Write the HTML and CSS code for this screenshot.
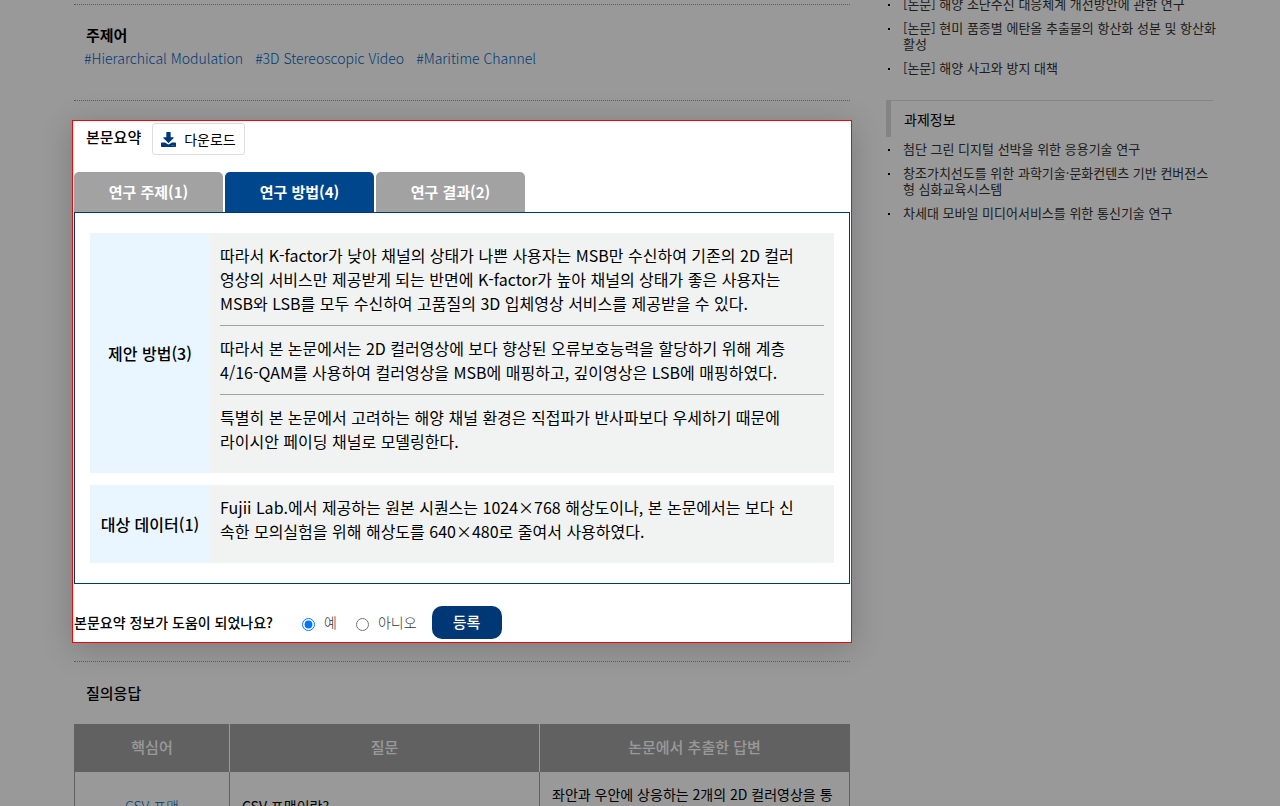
FILE: index.html
```html
<!DOCTYPE html>
<html lang="ko">
<head>
    <meta charset="UTF-8">
    <meta name="viewport" content="width=device-width, initial-scale=1.0">
    <title>본문요약</title>
    <link rel="stylesheet" href="styles.css">
</head>
<body>
    <div class="page">
        <main class="content">
            <section class="keywords">
                <h2 class="title">주제어</h2>
                <div class="keyword-list">
                    <a href="#">#Hierarchical Modulation</a>
                    <a href="#">#3D Stereoscopic Video</a>
                    <a href="#">#Maritime Channel</a>
                </div>
            </section>

            <section class="summary">
                <div class="summary-head">
                    <h2 class="title">본문요약</h2>
                    <button type="button" class="download">
                        <svg width="15" height="15" viewBox="0 0 512 512" aria-hidden="true">
                            <path fill="#003876" fill-rule="evenodd" d="M200 0h112c10 0 18 8 18 18v162h82c18 0 27 21 14 34L270 370c-8 8-20 8-28 0L86 214c-13-13-4-34 14-34h82V18c0-10 8-18 18-18zm312 386v102c0 13-11 24-24 24H24c-13 0-24-11-24-24V386c0-13 11-24 24-24h114l82 50c20 14 52 14 72 0l82-50h114c13 0 24 11 24 24zM388 464a12 12 0 1 0-24 0 12 12 0 0 0 24 0zm64 0a12 12 0 1 0-24 0 12 12 0 0 0 24 0z"/>
                        </svg>
                        다운로드
                    </button>
                </div>

                <div class="tabs" role="tablist">
                    <button type="button" class="tab" role="tab">연구 주제(1)</button>
                    <button type="button" class="tab active" role="tab" aria-selected="true">연구 방법(4)</button>
                    <button type="button" class="tab" role="tab">연구 결과(2)</button>
                </div>

                <div class="panel">
                    <table class="summary-table">
                        <tr>
                            <th scope="row">제안 방법(3)</th>
                            <td>
                                <p>따라서 K-factor가 낮아 채널의 상태가 나쁜 사용자는 MSB만 수신하여 기존의 2D 컬러<br>영상의 서비스만 제공받게 되는 반면에 K-factor가 높아 채널의 상태가 좋은 사용자는<br>MSB와 LSB를 모두 수신하여 고품질의 3D 입체영상 서비스를 제공받을 수 있다.</p>
                                <p>따라서 본 논문에서는 2D 컬러영상에 보다 향상된 오류보호능력을 할당하기 위해 계층<br>4/16-QAM를 사용하여 컬러영상을 MSB에 매핑하고, 깊이영상은 LSB에 매핑하였다.</p>
                                <p>특별히 본 논문에서 고려하는 해양 채널 환경은 직접파가 반사파보다 우세하기 때문에<br>라이시안 페이딩 채널로 모델링한다.</p>
                            </td>
                        </tr>
                        <tr>
                            <th scope="row">대상 데이터(1)</th>
                            <td>
                                <p>Fujii Lab.에서 제공하는 원본 시퀀스는 1024×768 해상도이나, 본 논문에서는 보다 신<br>속한 모의실험을 위해 해상도를 640×480로 줄여서 사용하였다.</p>
                            </td>
                        </tr>
                    </table>
                </div>

                <form class="feedback">
                    <span class="question">본문요약 정보가 도움이 되었나요?</span>
                    <input type="radio" name="helpful" id="helpfulYes" checked>
                    <label for="helpfulYes">예</label>
                    <input type="radio" name="helpful" id="helpfulNo">
                    <label for="helpfulNo">아니오</label>
                    <button type="button" class="submit">등록</button>
                </form>
            </section>

            <section class="qna">
                <h2 class="title">질의응답</h2>
                <table class="qna-table">
                    <thead>
                        <tr>
                            <th class="col-key">핵심어</th>
                            <th class="col-text">질문</th>
                            <th class="col-text">논문에서 추출한 답변</th>
                        </tr>
                    </thead>
                    <tbody>
                        <tr>
                            <td class="key"><a href="#">CSV 포맷</a></td>
                            <td>CSV 포맷이란?</td>
                            <td class="answer">좌안과 우안에 상응하는 2개의 2D 컬러영상을 통</td>
                        </tr>
                    </tbody>
                </table>
            </section>
        </main>

        <aside class="side">
            <ul class="side-list">
                <li>[논문] 해양 조난수신 대응체계 개선방안에 관한 연구</li>
                <li>[논문] 현미 품종별 에탄올 추출물의 항산화 성분 및 항산화<br>활성</li>
                <li>[논문] 해양 사고와 방지 대책</li>
            </ul>
            <h3 class="side-title">과제정보</h3>
            <ul class="side-list">
                <li>첨단 그린 디지털 선박을 위한 응용기술 연구</li>
                <li>창조가치선도를 위한 과학기술·문화컨텐츠 기반 컨버전스<br>형 심화교육시스템</li>
                <li>차세대 모바일 미디어서비스를 위한 통신기술 연구</li>
            </ul>
        </aside>
    </div>
</body>
</html>
```
FILE: styles.css
```css
* {
    box-sizing: border-box;
}
body {
    margin: 0;
    height: 100vh;
    overflow: hidden;
    background-color: #fff;
    color: #000;
    font-family: "Noto Sans CJK KR", sans-serif;
    font-size: 16px;
    line-height: 24px;
}
h2, h3, p, ul {
    margin: 0;
    padding: 0;
}
a {
    color: #0064c0;
    text-decoration: none;
}
button, input {
    font-family: inherit;
    margin: 0;
}
table {
    width: 100%;
}
.page {
    display: flex;
    gap: 36px;
    padding: 0 64px 0 74px;
}
.content {
    flex: 1;
    min-width: 0;
    padding-top: 4px;
}
.title {
    padding-left: 12px;
    font-size: 15px;
    font-weight: 500;
    line-height: 24px;
}

/* keywords */
.keywords {
    height: 97px;
    padding-top: 18px;
    border-top: 1px dotted #999;
    border-bottom: 1px dotted #999;
}
.keywords .title {
    font-weight: 700;
}
.keyword-list {
    display: flex;
    gap: 12px;
    padding-left: 10px;
    font-size: 14px;
    font-weight: 300;
    line-height: 22px;
}

/* highlighted summary, the shadow dims the rest of the page */
.summary {
    position: relative;
    z-index: 1;
    margin: 19px -2px 18px;
    padding: 2px 1px 3px;
    border: 1px solid #f00;
    background-color: #fff;
    box-shadow: 0 5px 30px rgba(0,0,0,0.2), 0 0 0 2000px rgba(0,0,0,0.4);
}
.summary-head {
    display: flex;
    align-items: flex-start;
    gap: 11px;
    height: 49px;
}
.summary-head .title {
    padding-top: 2px;
}
.download {
    display: flex;
    align-items: center;
    gap: 8px;
    height: 32px;
    padding: 0 8px;
    border: 1px solid #ddd;
    border-radius: 3px;
    background-color: #fff;
    color: #000;
    font-size: 14px;
}
.tabs {
    display: flex;
    gap: 2px;
}
.tab {
    width: 149px;
    height: 40px;
    padding: 0 0 2px;
    border: none;
    border-radius: 5px 5px 0 0;
    background-color: #a2a2a2;
    color: #fff;
    font-size: 15px;
    font-weight: 700;
}
.tab.active {
    background-color: #00468c;
}
.panel {
    padding: 8px 15px;
    border: 1px solid #003876;
}
.summary-table {
    border-spacing: 0 12px;
}
.summary-table th {
    width: 120px;
    padding: 0;
    background-color: #e9f6ff;
    font-size: 16px;
    font-weight: 500;
}
.summary-table td {
    padding: 0 10px 10px;
    background-color: #f1f3f3;
}
.summary-table p {
    padding: 10px 0;
}
.summary-table p + p {
    border-top: 1px solid #a2a2a2;
}
.feedback {
    display: flex;
    align-items: center;
    margin-top: 22px;
    color: #333;
    font-size: 14px;
    font-weight: 300;
    line-height: 22px;
}
.question {
    margin-right: 29px;
    color: #000;
    font-weight: 500;
}
.feedback span, .feedback label {
    padding-bottom: 2px;
}
.feedback input {
    width: 13px;
    height: 13px;
    margin-top: 3px;
}
.feedback label {
    margin: 0 19px 0 9px;
}
.feedback label:last-of-type {
    margin-right: 15px;
}
.submit {
    width: 70px;
    height: 33px;
    padding: 0 0 2px;
    border: none;
    border-radius: 10px;
    background-color: #003876;
    color: #fff;
    font-size: 15px;
    font-weight: 500;
}

/* questions and answers */
.qna {
    padding-top: 19px;
    border-top: 1px dotted #999;
}
.qna-table {
    margin-top: 19px;
    border-collapse: collapse;
    table-layout: fixed;
    font-size: 14px;
}
.qna-table th {
    height: 47px;
    padding: 0;
    border-right: 1px solid #fff;
    background-color: #a2a2a2;
    color: #fff;
    font-size: 15px;
    font-weight: 500;
}
.qna-table th:first-child {
    border-left: 1px solid #a2a2a2;
}
.qna-table th:last-child {
    border-right-color: #a2a2a2;
}
.col-key {
    width: 20%;
}
.col-text {
    width: 40%;
}
.qna-table td {
    height: 70px;
    padding: 10px 12px;
    border: 1px solid #a2a2a2;
}
.qna-table .key {
    text-align: center;
    font-weight: 300;
}
.qna-table .answer {
    vertical-align: top;
}

/* side column */
.side {
    width: 330px;
    margin-top: -4px;
}
.side-list {
    padding-left: 17px;
    color: #333;
    font-size: 13px;
    line-height: 16px;
    list-style: none;
}
.side-list li {
    position: relative;
    margin-bottom: 8px;
}
.side-list li::before {
    content: "";
    position: absolute;
    top: 8px;
    left: -15px;
    width: 2px;
    height: 2px;
    background-color: #000;
}
.side-title {
    height: 37px;
    margin: 24px 3px 4px 0;
    padding-left: 13px;
    border-top: 1px solid #ddd;
    border-left: 5px solid #ddd;
    font-size: 14px;
    font-weight: 400;
    line-height: 36px;
}
```
